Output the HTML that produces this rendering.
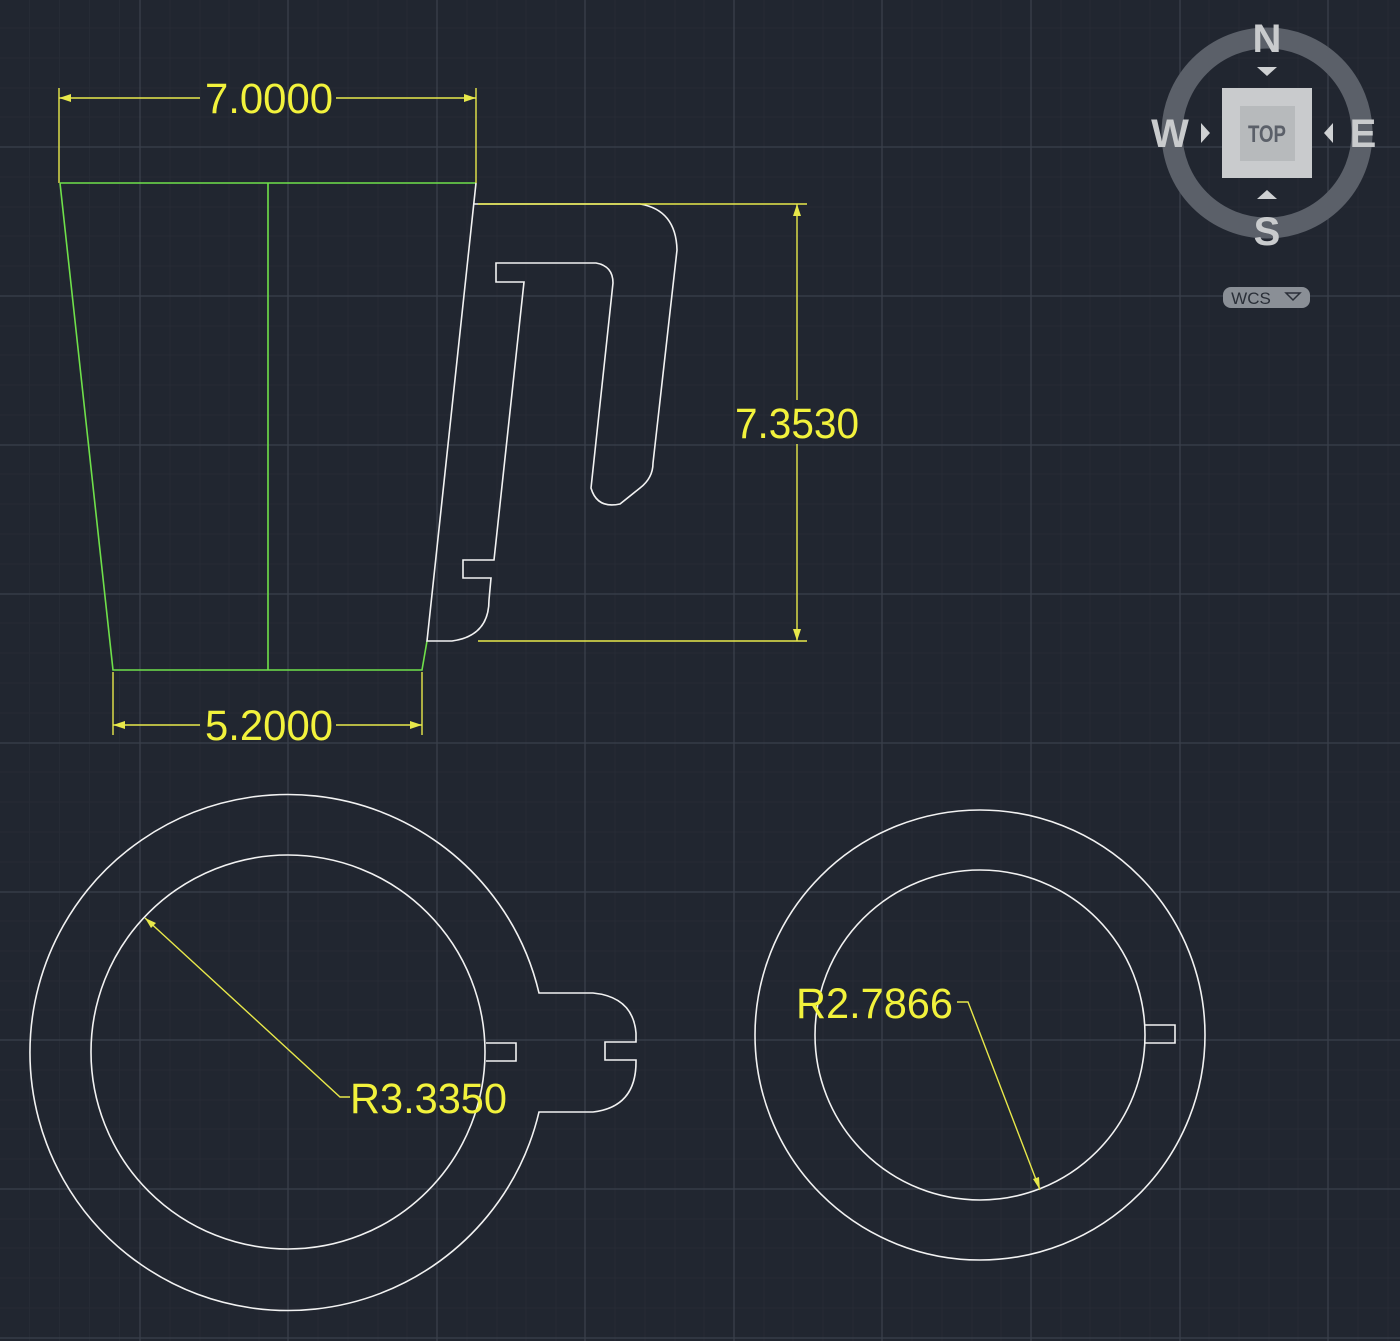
<!DOCTYPE html>
<html><head><meta charset="utf-8"><style>
html,body{margin:0;padding:0;background:#212630;}
svg{display:block}
text{font-family:"Liberation Sans",sans-serif;}
</style></head><body>
<svg width="1400" height="1341" viewBox="0 0 1400 1341" xmlns="http://www.w3.org/2000/svg">
<rect width="1400" height="1341" fill="#212630"/>
<g stroke="#262b35" stroke-width="1">
<path d="M29.5 0V1341M59.5 0V1341M89.5 0V1341M119.5 0V1341M170 0V1341M200 0V1341M229 0V1341M259 0V1341M318 0V1341M348 0V1341M378 0V1341M407 0V1341M467 0V1341M497 0V1341M526 0V1341M556 0V1341M615 0V1341M645 0V1341M675 0V1341M704 0V1341M764 0V1341M793 0V1341M823 0V1341M853 0V1341M912 0V1341M942 0V1341M972 0V1341M1001 0V1341M1061 0V1341M1090 0V1341M1120 0V1341M1150 0V1341M1209 0V1341M1239 0V1341M1269 0V1341M1298 0V1341M1358 0V1341M1388 0V1341"/>
<path d="M0 28H1400M0 58H1400M0 88H1400M0 117H1400M0 177H1400M0 207H1400M0 236H1400M0 266H1400M0 326H1400M0 355H1400M0 385H1400M0 415H1400M0 474H1400M0 504H1400M0 534H1400M0 564H1400M0 623H1400M0 653H1400M0 683H1400M0 713H1400M0 772H1400M0 802H1400M0 832H1400M0 862H1400M0 921H1400M0 951H1400M0 981H1400M0 1010H1400M0 1070H1400M0 1100H1400M0 1129H1400M0 1159H1400M0 1219H1400M0 1248H1400M0 1278H1400M0 1308H1400"/>
</g>
<g stroke="#3a404b" stroke-width="1.3">
<path d="M140 0V1341M288 0V1341M437 0V1341M585 0V1341M734 0V1341M882 0V1341M1031 0V1341M1180 0V1341M1328 0V1341"/>
<path d="M0 147H1400M0 296H1400M0 445H1400M0 594H1400M0 743H1400M0 892H1400M0 1040H1400M0 1189H1400M0 1338H1400"/>
</g>

<circle cx="1267" cy="133" r="95" fill="none" stroke="#5b6069" stroke-width="21"/>
<rect x="1222" y="88" width="90" height="90" fill="#c9cbcd"/>
<rect x="1240" y="106" width="55" height="55" fill="#b7babc"/>
<text x="1267" y="142" text-anchor="middle" font-size="24" font-weight="bold" fill="#5b6069" textLength="38" lengthAdjust="spacingAndGlyphs">TOP</text>
<g fill="#cfd1d3">
<path d="M1257 67h20l-10 9z"/><path d="M1257 199h20l-10-9z"/>
<path d="M1201 123v20l9-10z"/><path d="M1333 123v20l-9-10z"/>
</g>
<g font-size="40" font-weight="bold" fill="#c9cbcd" text-anchor="middle">
<text x="1267" y="52">N</text><text x="1267" y="245">S</text>
<text x="1170" y="147">W</text><text x="1363" y="147">E</text>
</g>
<rect x="1223" y="287" width="87" height="21" rx="8" fill="#8a8f96"/>
<text x="1251" y="304" font-size="17" fill="#2a2f38" text-anchor="middle">WCS</text>
<path d="M1286 293h14l-7 7z" fill="none" stroke="#2a2f38" stroke-width="1.5"/>

<g stroke="#6fe04a" stroke-width="1.6" fill="none">
<path d="M60 183H476M60 183L113 670H422L427 641M268 183V670"/>
</g>
<g stroke="#f2f2f2" stroke-width="1.6" fill="none">
<path d="M476 183L427 641H452Q489 636 489 600L491 578H463V560H494L524 282H496V263H596Q613 266 613 283L591 488Q597 509 620 504L640 488Q653 478 653 463L677 250Q676 210 640 204H474"/>
<circle cx="288" cy="1052" r="197"/>
<path d="M539 993A258 258 0 1 0 539 1112H593Q636 1107 636 1062V1060H605V1042H636V1033Q633 997 593 993Z"/>
<path d="M486 1043H516V1061H486"/>
<circle cx="980" cy="1035" r="225"/>
<circle cx="980" cy="1035" r="165"/>
<path d="M1145 1025H1175V1043H1145"/>
</g>

<g stroke="#e8e84a" stroke-width="1.4" fill="none">
<path d="M59 88V183M476 88V183M59 98H200M336 98H476"/>
<path d="M113 672V735M422 672V735M113 725H200M336 725H422"/>
<path d="M478 204H807M478 641H807M797 204V400M797 444V641"/>
<path d="M145 918L340 1097H350"/>
<path d="M957 1002H968L1040 1190"/>
</g>
<g fill="#e8e84a">
<path d="M59 98l12-4v8zM476 98l-12-4v8z"/>
<path d="M113 725l12-4v8zM422 725l-12-4v8z"/>
<path d="M797 204l-4 12h8zM797 641l-4-12h8z"/>
<path d="M145 918l11 5-5 5z"/>
<path d="M1040 1190l-7-11 6-2z"/>
</g>
<g fill="#f2f23c" font-size="43">
<text x="205" y="113" textLength="128" lengthAdjust="spacingAndGlyphs">7.0000</text>
<text x="205" y="740" textLength="128" lengthAdjust="spacingAndGlyphs">5.2000</text>
<text x="735" y="438" textLength="124" lengthAdjust="spacingAndGlyphs">7.3530</text>
<text x="350" y="1113" textLength="157" lengthAdjust="spacingAndGlyphs">R3.3350</text>
<text x="796" y="1018" textLength="157" lengthAdjust="spacingAndGlyphs">R2.7866</text>
</g>
</svg>
</body></html>
